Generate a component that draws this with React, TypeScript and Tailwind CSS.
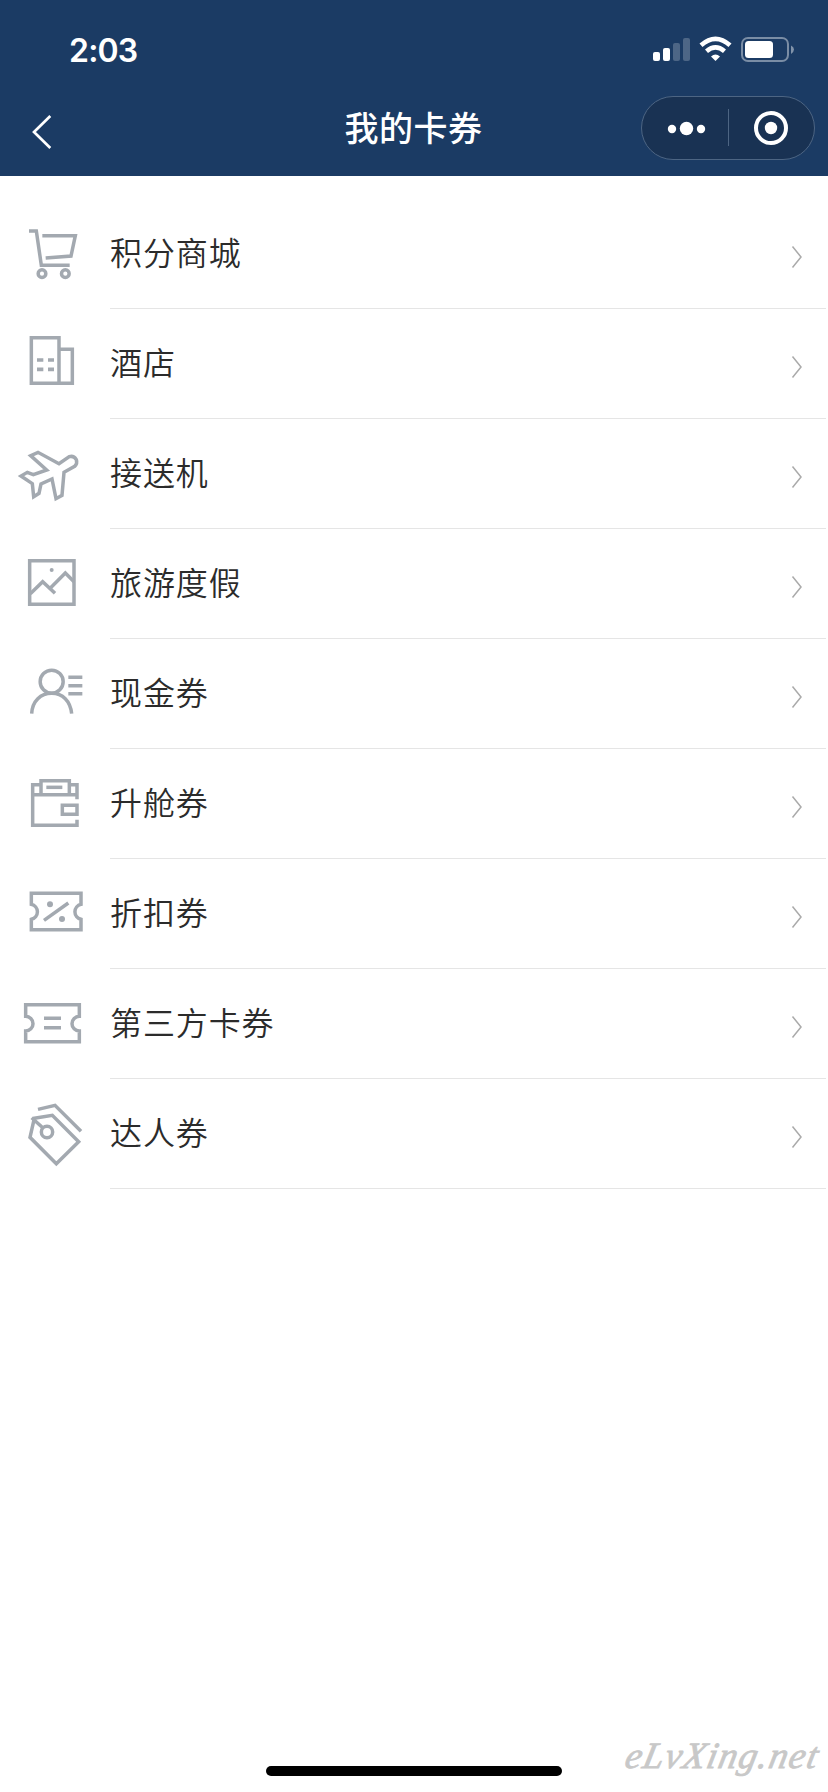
import type { ReactNode } from "react";

type Item = { label: string; icon: ReactNode };

/* Each icon is drawn in a 330 x 327 box that fills the left cell of its row. */
const items: Item[] = [
  {
    label: "积分商城",
    icon: (
      <>
        <path d="M87 96H109L124 199H209" />
        <path d="M127 110H226L213 171L137 177" />
        <circle cx="126" cy="224" r="11.5" />
        <circle cx="196" cy="224" r="11.5" />
      </>
    ),
  },
  {
    label: "酒店",
    icon: (
      <>
        <path d="M94 86H177V223H94Z" />
        <path d="M177 121H217V223H177" />
        <path d="M111 153H130M144 153H162M111 181H130M144 181H162" strokeWidth="11" />
      </>
    ),
  },
  {
    label: "接送机",
    icon: (
      <path d="M177 134L114 100L92 110L140 153L100 167L82 160L63 171L97 194L101 233L117 223L123 195L156 180L168 239L186 229L192 160L224 142Q233 134 229 122Q221 109 208 113Z" />
    ),
  },
  {
    label: "旅游度假",
    icon: (
      <>
        <path d="M89 95H222V226H89Z" />
        <path d="M91 194L128 158L165 193M149 179L196 132L222 158" />
        <circle cx="155" cy="123" r="6" fill="currentColor" stroke="none" />
      </>
    ),
  },
  {
    label: "现金券",
    icon: (
      <>
        <circle cx="155" cy="128" r="34.5" />
        <path d="M95 224C97 186 122 163 155 163S211 186 215 224" />
        <path d="M205 115H247M205 140H247M205 164H247" />
      </>
    ),
  },
  {
    label: "升舱券",
    icon: (
      <>
        <path d="M231 151V107H208M123 107H98V229H231V212" />
        <path d="M98 137H231M123 137V95H208V137" />
        <path d="M139 115H187" />
        <path d="M231 169H187V196H231Z" />
      </>
    ),
  },
  {
    label: "折扣券",
    icon: (
      <>
        <path d="M94 103H243V136A23 23 0 0 0 243 181V212H94V181A23 23 0 0 0 94 136Z" />
        <path d="M132 184L205 132" />
        <circle cx="150" cy="136" r="9" fill="currentColor" stroke="none" />
        <circle cx="186" cy="180" r="9" fill="currentColor" stroke="none" />
      </>
    ),
  },
  {
    label: "第三方卡券",
    icon: (
      <>
        <path d="M77 107H238V142A22 22 0 0 0 238 186V218H77V186A22 22 0 0 0 77 142Z" />
        <path d="M132 148H183M132 176H183" />
      </>
    ),
  },
  {
    label: "达人券",
    icon: (
      <>
        <path d="M114 91L165 79L243 157" />
        <path d="M103 118L157 109L236 188L169 254L90 175Z" />
        <path d="M95 116L130 148" />
        <circle cx="141" cy="159" r="17" />
      </>
    ),
  },
];

function StatusBar() {
  return (
    <div className="flex h-[96px] items-start justify-between pl-[69px] pr-[33px] pt-[30px]">
      <span className="pt-px font-['Inter','Liberation_Sans',sans-serif] text-[32px] font-semibold leading-[40px] tracking-[-0.8px]">
        2:03
      </span>
      <svg className="mt-[6px] h-[28px] w-[144px]" viewBox="0 0 144 28" fill="none">
        <g fill="#fff">
          <rect x="2" y="16" width="7" height="9" rx="2" />
          <rect x="12" y="12" width="7" height="13" rx="2" />
          <rect x="22" y="7" width="7" height="18" rx="2" opacity=".22" />
          <rect x="32" y="2" width="7" height="23" rx="2" opacity=".22" />
          <path d="M64.500 25L60 20.500Q64.500 16.500 69 20.500Z" />
        </g>
        <path d="M50 9.300Q64.500-3.500 79 9.300M55.500 15.200Q64.500 7.500 73.500 15.200" stroke="#fff" strokeWidth="4.600" />
        <rect x="91" y="1.900" width="46" height="23.200" rx="6" stroke="#fff" strokeOpacity=".42" strokeWidth="2" />
        <rect x="94" y="5" width="28" height="17" rx="3.500" fill="#fff" />
        <path d="M140 9.500Q143 11 143 13.500T140 18Z" fill="#fff" opacity=".45" />
      </svg>
    </div>
  );
}

function Header() {
  return (
    <header className="h-[176px] shrink-0 bg-[#1b3b64] text-white">
      <StatusBar />
      <div className="grid h-[64px] grid-cols-[200px_1fr_200px] items-center pr-[13px]">
        <svg className="mt-[7px] h-[40px] w-[60px]" viewBox="0 0 60 40" fill="none" stroke="#fff" strokeWidth="2.700">
          <path d="M50.300 4L34 20L50.300 36" />
        </svg>
        <h1 className="pb-[3px] pl-[12px] text-center text-[34px] font-medium leading-[50px] tracking-[0.5px]">
          我的卡券
        </h1>
        <div className="ml-[26px] flex h-[64px] w-[174px] items-center rounded-full border border-[#4d6583] bg-[#193253]">
          <svg className="h-[62px] w-[172px]" viewBox="0 0 172 62">
            <g fill="#fff">
              <circle cx="30" cy="32" r="4.200" />
              <circle cx="44.500" cy="31.500" r="6.700" />
              <circle cx="59" cy="32" r="4.200" />
              <circle cx="129" cy="31" r="6.200" />
            </g>
            <path d="M86.500 12V49" stroke="#4d6583" />
            <circle cx="129" cy="31" r="15" fill="none" stroke="#fff" strokeWidth="4" />
          </svg>
        </div>
      </div>
    </header>
  );
}

function Row({ label, icon }: Item) {
  return (
    <li className="flex h-[110px]">
      <svg
        className="h-[109px] w-[110px] shrink-0 text-[#a3a9b0]"
        viewBox="0 0 330 327"
        fill="none"
        stroke="currentColor"
        strokeWidth="10.5"
      >
        {icon}
      </svg>
      <div className="mr-[2px] flex flex-1 items-center justify-between border-b border-[#e5e5e5] pr-[22px]">
        <span className="pb-[6px] text-[32px] font-[350] leading-[48px] tracking-[0.9px] text-[#2b2b2b]">{label}</span>
        <svg className="mt-[6px] h-[24px] w-[14px]" viewBox="0 0 14 24" fill="none" stroke="#aaa" strokeWidth="1.500">
          <path d="M2.500 1.500L11 12L2.500 22.500" />
        </svg>
      </div>
    </li>
  );
}

export default function App() {
  return (
    <div className="relative flex h-[1792px] w-[828px] flex-col overflow-hidden bg-white font-['Noto_Sans_CJK_SC',sans-serif]">
      <Header />
      <ul className="flex-1 pt-[23px]">
        {items.map((item) => (
          <Row key={item.label} {...item} />
        ))}
      </ul>
      <footer className="flex justify-center pb-[16px]">
        <div className="h-[10px] w-[296px] rounded-full bg-black" />
      </footer>
      <div className="absolute bottom-[12px] right-[9px] -skew-x-12 whitespace-nowrap font-['Liberation_Serif',serif] text-[37px] italic leading-[48px] tracking-[1.4px] text-[#c8c8c8] [-webkit-text-stroke:0.8px_#c8c8c8]">
        eLvXing.net
      </div>
    </div>
  );
}
